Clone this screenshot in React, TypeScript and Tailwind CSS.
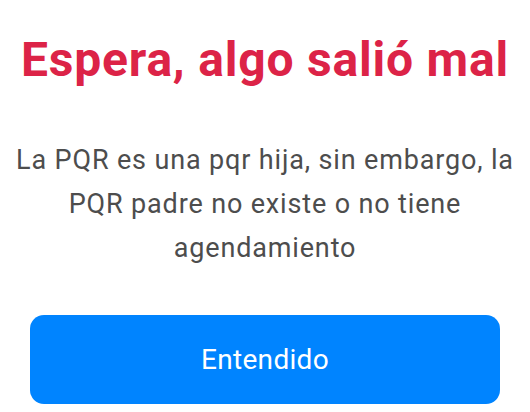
export default function App() {
  return (
    <div className="w-[530px] h-[412px] bg-white flex flex-col items-center" style={{ fontFamily: "Roboto, 'Noto Sans', sans-serif" }}>
      <h1 className="mt-[32px] text-[48px] leading-[56px] font-bold tracking-[0.8px] text-[#dc2347] text-center">
        Espera, algo salió mal
      </h1>
      <p className="mt-[50px] px-[8px] text-[27px] leading-[44px] tracking-[0.85px] text-[#4d4d4d] text-center">
        La PQR es una pqr hija, sin embargo, la PQR padre no existe o no tiene agendamiento
      </p>
      <button className="mt-[45px] w-[470px] h-[89px] rounded-[14px] bg-[#0084ff] text-white text-[28px] tracking-[0.3px]">
        Entendido
      </button>
    </div>
  );
}
